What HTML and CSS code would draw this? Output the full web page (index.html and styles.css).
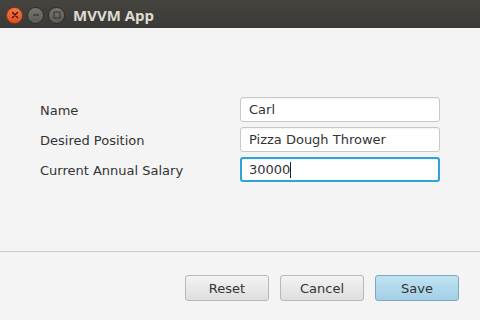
FILE: index.html
```html
<!DOCTYPE html>
<html lang="en">
<head>
    <meta charset="UTF-8">
    <title>MVVM App</title>
    <link rel="stylesheet" href="styles.css">
</head>
<body>
    <div class="window">
        <header class="titlebar">
            <div class="controls">
                <span class="ctl close">
                    <svg width="8" height="8" viewBox="0 0 8 8"><path d="M1.5 1.5l5 5M6.5 1.5l-5 5" stroke="#3a1a10" stroke-width="1.4" stroke-linecap="round"/></svg>
                </span>
                <span class="ctl">
                    <svg width="8" height="8" viewBox="0 0 8 8"><path d="M1 4h6" stroke="#3c3b37" stroke-width="1.4"/></svg>
                </span>
                <span class="ctl">
                    <svg width="8" height="8" viewBox="0 0 8 8"><rect x="1" y="1" width="6" height="6" fill="none" stroke="#3c3b37" stroke-width="1.2"/></svg>
                </span>
            </div>
            <h1 class="title">MVVM App</h1>
        </header>

        <main class="form">
            <label class="label">Name</label>
            <div class="field">Carl</div>
            <label class="label">Desired Position</label>
            <div class="field">Pizza Dough Thrower</div>
            <label class="label">Current Annual Salary</label>
            <div class="field focused">30000<span class="caret"></span></div>
        </main>

        <footer class="actions">
            <button class="btn">Reset</button>
            <button class="btn">Cancel</button>
            <button class="btn default">Save</button>
        </footer>
    </div>
</body>
</html>
```

FILE: styles.css
```css
body {
    margin: 0;
    font-family: "DejaVu Sans", sans-serif;
    font-size: 13px;
    color: #333;
    background: #f4f4f4;
}

.window {
    width: 480px;
    height: 320px;
    display: flex;
    flex-direction: column;
}

/* title bar */
.titlebar {
    height: 28px;
    background: linear-gradient(#45443f, #3a3935);
    display: flex;
    align-items: center;
    flex-shrink: 0;
}

.controls {
    display: flex;
    gap: 4px;
    padding-left: 6px;
    padding-top: 2px;
}

.ctl {
    width: 15px;
    height: 15px;
    border-radius: 50%;
    background: linear-gradient(#77766f, #5b5a55);
    border: 1px solid #2f2e2b;
    display: flex;
    align-items: center;
    justify-content: center;
}

.ctl.close {
    background: linear-gradient(#f2784b, #e0501f);
    border-color: #8f3214;
}

.title {
    margin: 0 0 0 8px;
    padding-top: 1px;
    font-family: "Open Sans", "DejaVu Sans", sans-serif;
    font-size: 15px;
    font-weight: 700;
    color: #dfdbd2;
}

/* form */
.form {
    flex: 1;
    display: grid;
    grid-template-columns: 200px 200px;
    grid-auto-rows: 25px;
    row-gap: 5px;
    align-content: start;
    padding: 69px 0 0 40px;
    border-bottom: 1px solid #cdcdcd;
}

.label {
    display: flex;
    align-items: center;
    padding-top: 2px;
}

.field {
    box-sizing: border-box;
    background: #fff;
    border: 1px solid #c8c8c8;
    border-radius: 3px;
    padding: 0 8px;
    display: flex;
    align-items: center;
    box-shadow: inset 0 1px 1px rgba(0, 0, 0, 0.05);
}

.field.focused {
    border: 2px solid #2ea3d8;
    padding: 0 7px;
}

.caret {
    width: 1px;
    height: 16px;
    background: #222;
}

/* buttons */
.actions {
    height: 68px;
    display: flex;
    justify-content: flex-end;
    align-items: flex-start;
    gap: 11px;
    padding: 23px 21px 0 0;
    box-sizing: border-box;
}

.btn {
    width: 84px;
    height: 26px;
    font-family: inherit;
    font-size: 13px;
    color: #333;
    background: linear-gradient(#f3f3f3, #dedede);
    border: 1px solid #b8b8b8;
    border-radius: 3px;
}

.btn.default {
    background: linear-gradient(#bfe3f3, #a3cfe5);
    border-color: #7fa9c2;
}
```
